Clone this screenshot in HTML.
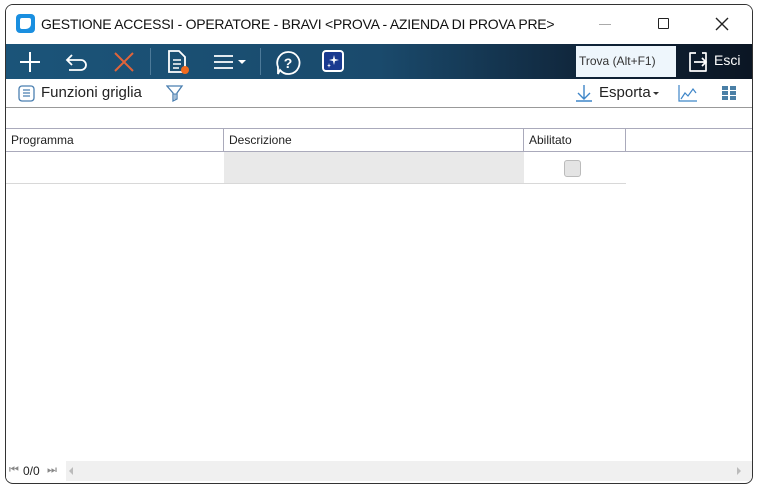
<!DOCTYPE html>
<html><head><meta charset="utf-8"><style>
*{box-sizing:border-box;margin:0;padding:0}
body{width:757px;height:488px;background:#fff;font-family:"Liberation Sans",sans-serif;position:relative;overflow:hidden}
.win{position:absolute;left:5px;top:4px;width:748px;height:480px;border:1px solid #333;border-radius:8px;overflow:hidden;background:#fff}
.title{position:absolute;left:0;top:0;width:100%;height:39px;background:#fff}
.title .t{position:absolute;left:35px;top:11px;font-size:14px;letter-spacing:-0.25px;color:#111;white-space:nowrap}
.tb{position:absolute;left:0;top:39px;width:100%;height:35px;background:linear-gradient(90deg,#1b5479 0%,#1a4a6c 50%,#0f2236 80%,#0b1624 100%)}
.sub{position:absolute;left:0;top:74px;width:100%;height:29px;border-bottom:1px solid #999}
.abs{position:absolute}
.hdr{position:absolute;top:123px;left:0;width:620px;height:24px;border-top:1px solid #aab;border-bottom:1px solid #aab;background:#fff;font-size:12px;color:#222}
.hdr div{position:absolute;top:0;height:23px;line-height:22px;padding-left:5px;border-right:1px solid #aab}
.hdr2{position:absolute;top:123px;left:620px;width:128px;height:24px;border-top:1px solid #aab;border-bottom:1px solid #aab}
</style></head><body>
<div class="win">
 <div class="title">
  <div class="abs" style="left:10px;top:9px;width:19px;height:19px;background:#1a8fe0;border-radius:4px"><div class="abs" style="left:4px;top:4px;width:11px;height:11px;background:#fff;border-radius:2px 2px 5px 2px"></div></div>
  <div class="t">GESTIONE ACCESSI - OPERATORE - BRAVI &lt;PROVA - AZIENDA DI PROVA PRE&gt;</div>
  <div class="abs" style="left:593px;top:19px;width:12px;height:1px;background:#aaa"></div>
  <div class="abs" style="left:652px;top:13px;width:11px;height:11px;border:1.3px solid #222;border-radius:1px"></div>
  <svg class="abs" style="left:709px;top:12px" width="14" height="14"><path d="M1 1L13 13M13 1L1 13" stroke="#222" stroke-width="1.4"/></svg>
 </div>
 <div class="tb">
  <svg class="abs" style="left:12px;top:6px" width="24" height="24"><path d="M12 2V22M2 12H22" stroke="#fff" stroke-width="2"/></svg>
  <svg class="abs" style="left:58px;top:6px" width="26" height="24"><path d="M8 5L3 10L8 15M3 10H17A5 5 0 0 1 17 20H5" stroke="#fff" stroke-width="1.8" fill="none"/></svg>
  <svg class="abs" style="left:106px;top:6px" width="24" height="24"><path d="M3 3L21 21M21 3L3 21" stroke="#e0643a" stroke-width="2"/></svg>
  <div class="abs" style="left:144px;top:4px;width:1px;height:27px;background:#4d7a99"></div>
  <svg class="abs" style="left:160px;top:5px" width="26" height="26"><path d="M3 2H13L19 8V23H3Z" stroke="#fff" stroke-width="1.8" fill="none"/><path d="M7 11H15M7 15H15M7 19H13" stroke="#fff" stroke-width="1.6"/><circle cx="19" cy="21" r="4" fill="#f06a1e"/></svg>
  <svg class="abs" style="left:207px;top:8px" width="36" height="20"><path d="M1 4H20M1 10H20M1 16H20" stroke="#fff" stroke-width="1.8"/><path d="M25 8H33L29 12Z" fill="#fff"/></svg>
  <div class="abs" style="left:254px;top:4px;width:1px;height:27px;background:#4d7a99"></div>
  <svg class="abs" style="left:269px;top:6px" width="26" height="26"><path d="M13 2A11 11 0 1 1 5 20L3 24L3 17A11 11 0 0 1 13 2Z" stroke="#fff" stroke-width="1.8" fill="none"/><text x="13" y="18" font-size="14" font-weight="bold" fill="#fff" text-anchor="middle" font-family="Liberation Sans">?</text></svg>
  <div class="abs" style="left:316px;top:6px;width:22px;height:22px;border:2px solid #fff;border-radius:4px;background:#1a3a90"><svg width="18" height="18"><path d="M10 3L11 7L15 8L11 9L10 13L9 9L5 8L9 7Z M5 11L5.5 13L7 13.5L5.5 14L5 16L4.5 14L3 13.5L4.5 13Z" fill="#fff"/></svg></div>
  <div class="abs" style="left:570px;top:2px;width:100px;height:31px;background:#eef6fc;font-size:12px;color:#333;line-height:31px;padding-left:3px">Trova (Alt+F1)</div>
  <svg class="abs" style="left:681px;top:7px" width="24" height="22"><path d="M9 2H3V20H19V2H15" stroke="#fff" stroke-width="1.7" fill="none" stroke-linejoin="round"/><path d="M7 11H19M15 7L19 11L15 15" stroke="#fff" stroke-width="1.7" fill="none"/></svg>
  <div class="abs" style="left:708px;top:8px;font-size:14px;color:#fff">Esci</div>
 </div>
 <div class="sub">
  <svg class="abs" style="left:12px;top:6px" width="18" height="18"><rect x="1" y="1" width="15" height="15" rx="3" stroke="#4a7fb0" fill="none" stroke-width="1.3"/><path d="M5 5H12M5 8H12M5 11H12" stroke="#4a7fb0" stroke-width="1.2"/></svg>
  <div class="abs" style="left:35px;top:5px;font-size:15px;color:#222">Funzioni griglia</div>
  <svg class="abs" style="left:160px;top:5px" width="18" height="20"><path d="M1 2H16L11 9V15L7 17V9Z" stroke="#4a7fb0" fill="none" stroke-width="1.3"/><path d="M7 10H11M9 10V15" stroke="#4a7fb0" stroke-width="1"/></svg>
  <svg class="abs" style="left:568px;top:4px" width="20" height="20"><path d="M10 2V15M4 10L10 16L16 10M2 18H18" stroke="#3f86c8" stroke-width="1.4" fill="none"/></svg>
  <div class="abs" style="left:593px;top:5px;font-size:15px;color:#222">Esporta</div>
  <svg class="abs" style="left:647px;top:12px" width="8" height="6"><path d="M0 1H6L3 4Z" fill="#333"/></svg>
  <svg class="abs" style="left:672px;top:5px" width="20" height="18"><path d="M1 1V17H19" stroke="#3f86c8" stroke-width="1.2" fill="none"/><path d="M3 15L7 9L10 12L15 5L18 9" stroke="#3f86c8" stroke-width="1.2" fill="none"/></svg>
  <svg class="abs" style="left:715px;top:6px" width="16" height="16"><rect x="1" y="1" width="6" height="4" fill="#4a7fa6"/><rect x="9" y="1" width="6" height="4" fill="#4a7fa6"/><rect x="1" y="6" width="6" height="4" fill="#4a7fa6"/><rect x="9" y="6" width="6" height="4" fill="#4a7fa6"/><rect x="1" y="11" width="6" height="4" fill="#4a7fa6"/><rect x="9" y="11" width="6" height="4" fill="#4a7fa6"/></svg>
 </div>
 <div class="hdr">
  <div style="left:0;width:218px">Programma</div>
  <div style="left:218px;width:300px">Descrizione</div>
  <div style="left:518px;width:102px">Abilitato</div>
 </div>
 <div class="hdr2"></div>
 <div class="abs" style="left:218px;top:147px;width:300px;height:31px;background:#e9e9e9"></div>
 <div class="abs" style="left:0;top:178px;width:620px;height:1px;background:#d8d8d8"></div>
 <div class="abs" style="left:558px;top:155px;width:17px;height:17px;border:1px solid #bbb;border-radius:3px;background:#e4e4e4"></div>
 <div class="abs" style="left:0;top:456px;width:748px;height:20px;background:#f0f0f0"></div>
 <div class="abs" style="left:0;top:456px;width:60px;height:20px;background:#fff"></div>
 <div class="abs" style="left:3px;top:459px;font-size:11px;color:#888">⏮</div>
 <div class="abs" style="left:17px;top:459px;font-size:12px;color:#222">0/0</div>
 <div class="abs" style="left:41px;top:459px;font-size:11px;color:#888">⏭</div>
 <svg class="abs" style="left:62px;top:462px" width="6" height="9"><path d="M5 0V8L1 4Z" fill="#bbb"/></svg>
 <svg class="abs" style="left:730px;top:462px" width="6" height="9"><path d="M1 0V8L5 4Z" fill="#bbb"/></svg>
</div>
</body></html>
